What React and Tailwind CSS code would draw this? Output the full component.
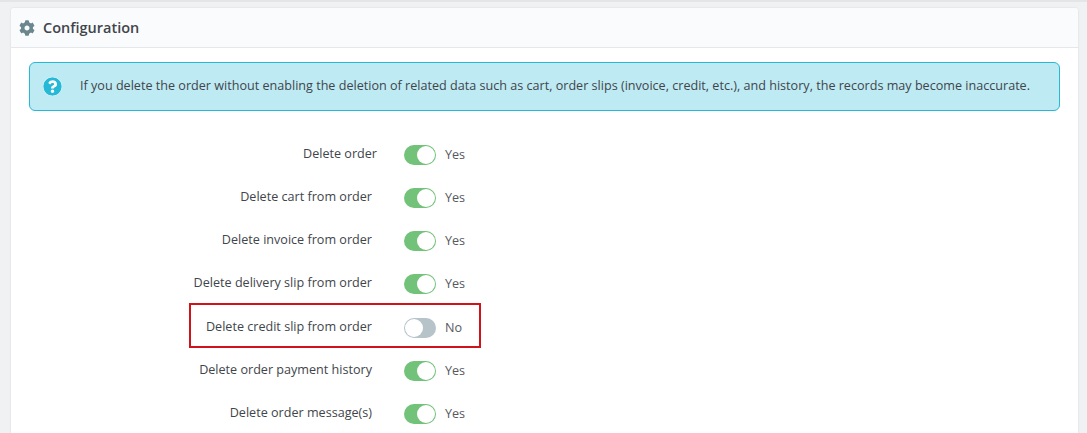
import React from 'react';
import { FaCog, FaQuestionCircle } from 'react-icons/fa';

const rows = [
  { label: 'Delete order', on: true, nudge: 'pr-0' },
  { label: 'Delete cart from order', on: true, nudge: 'pr-[5px]' },
  { label: 'Delete invoice from order', on: true, nudge: 'pr-[5px]' },
  { label: 'Delete delivery slip from order', on: true, nudge: 'pr-[5px]' },
  { label: 'Delete credit slip from order', on: false, nudge: 'pr-[5px]', marked: true },
  { label: 'Delete order payment history', on: true, nudge: 'pr-[5px]' },
  { label: 'Delete order message(s)', on: true, nudge: 'pr-[5px]' },
];

const Toggle = ({ on }) => (
  <div className={`w-[32px] h-[20px] rounded-full relative shrink-0 ${on ? 'bg-[#72c279]' : 'bg-[#b6c3c9]'}`}>
    <span
      className={`absolute top-[1px] w-[18px] h-[18px] rounded-full bg-white ${on ? 'right-[1px]' : 'left-[1px]'}`}
    ></span>
  </div>
);

const App = () => {
  return (
    <div className="h-[433px] overflow-hidden bg-[#eff1f2] border-t-2 border-[#e3e5e6] pt-[6px] pl-[11px] pr-[9px] text-[#41454b] font-['Open_Sans',sans-serif]">
      <div className="bg-white rounded-t-[3px] h-[500px] shadow-[0_0_2px_rgba(0,0,0,0.12)]">
        {/* Header */}
        <div className="h-[40px] pt-[1px] bg-[#fafbfc] border-b border-[#e5e8ea] flex items-center pl-[8px] gap-[8px] rounded-t-[3px]">
          <FaCog size={16} className="text-[#6c868e]" />
          <h3 className="text-[14.5px] font-semibold leading-none">Configuration</h3>
        </div>

        <div className="pt-[14px] px-[18px]">
          {/* Info alert */}
          <div className="h-[49px] bg-[#beeaf3] border border-[#25b9d7] rounded-[6px] flex items-center pl-[13px] gap-[18px]">
            <FaQuestionCircle size={19} className="text-[#25b9d7] bg-white rounded-full" />
            <p className="text-[12.6px] whitespace-nowrap">
              If you delete the order without enabling the deletion of related data such as cart, order slips (invoice, credit, etc.), and history, the records may become inaccurate.
            </p>
          </div>

          {/* Options */}
          <div className="mt-[34px] flex flex-col gap-[23px]">
            {rows.map((row) => (
              <div key={row.label} className={`flex items-center h-[20px] relative ${row.marked ? 'mt-[1px]' : ''}`}>
                <div className={`w-[348px] text-right text-[12.6px] -mt-[2px] whitespace-nowrap ${row.nudge}`}>
                  {row.label}
                </div>
                <div className="ml-[27px]">
                  <Toggle on={row.on} />
                </div>
                <span className="ml-[9px] text-[12.6px] text-[#555a60]">{row.on ? 'Yes' : 'No'}</span>
                {row.marked && (
                  <div className="absolute left-[160px] top-[-15px] w-[292px] h-[45px] border-2 border-[#d0121a]"></div>
                )}
              </div>
            ))}
          </div>
        </div>
      </div>
    </div>
  );
};

export default App;
